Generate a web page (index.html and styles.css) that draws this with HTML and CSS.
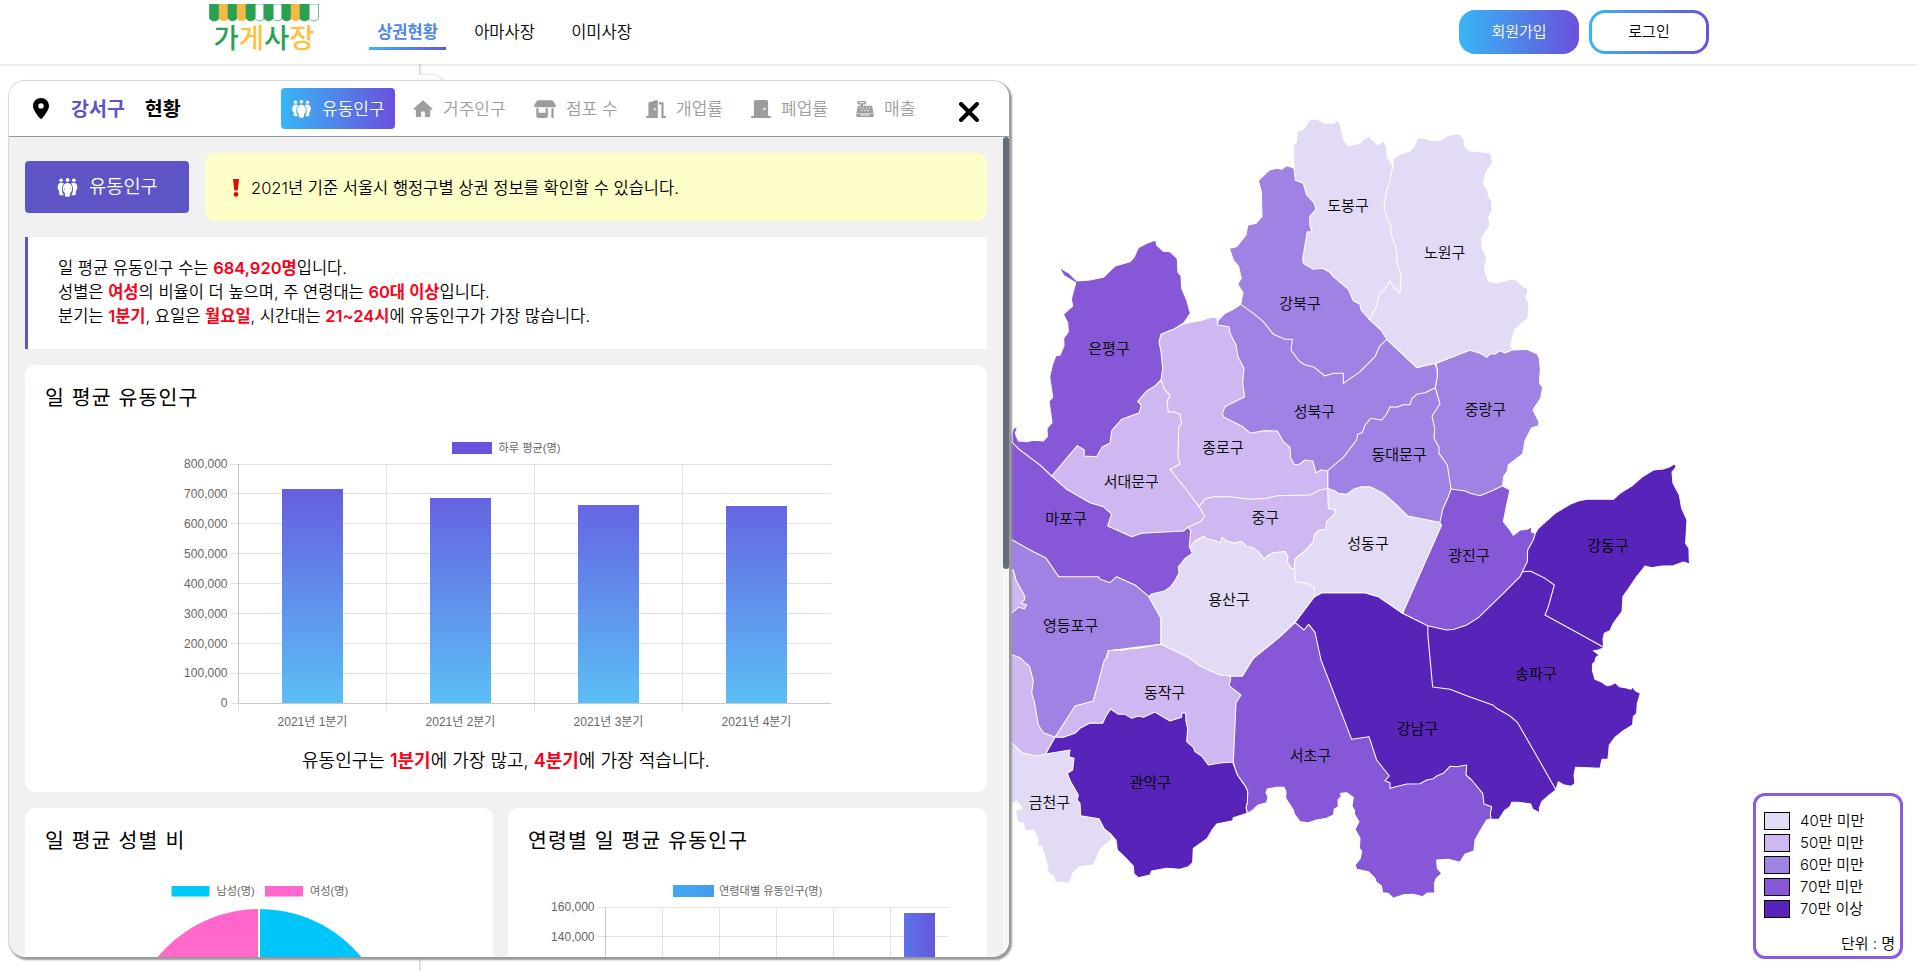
FILE: index.html
```html
<!DOCTYPE html>
<html lang="ko">
<head>
<meta charset="utf-8">
<title>가게사장 - 상권현황</title>
<link rel="stylesheet" href="styles.css">
</head>
<body>
<svg class="defs" width="0" height="0" aria-hidden="true">
  <defs>
    <symbol id="people" viewBox="0 0 24 22">
      <circle cx="4.6" cy="2.6" r="2.1"/><circle cx="12" cy="2.2" r="2.2"/><circle cx="19.4" cy="2.6" r="2.1"/>
      <path d="M4.8 5.600C2 5.600.6 8 .6 11c0 2 .8 3.200 1.800 4v3.200c0 1 .6 1.800 1.600 1.800h2.600c.5 0 .9-.3 1-.7C6.200 17.500 5.600 15.500 5.600 13c0-2.800.8-5 2.300-6.300-.6-.7-2-1.100-3.100-1.100z"/>
      <path d="M19.200 5.600c2.800 0 4.200 2.400 4.200 5.400 0 2-.8 3.200-1.800 4v3.200c0 1-.6 1.800-1.600 1.800h-2.600c-.5 0-.9-.3-1-.7 1.400-1.800 2-3.800 2-6.300 0-2.800-.8-5-2.300-6.300.6-.7 2-1.100 3.100-1.100z"/>
      <path fill-rule="evenodd" d="M12 5.800c-3.300 0-5.400 3-5.400 6.700 0 2.400 1 4 2.400 4.900V20c0 1 .8 1.800 1.800 1.800h2.400c1 0 1.800-.8 1.800-1.800v-2.600c1.400-.9 2.400-2.500 2.400-4.900 0-3.700-2.100-6.700-5.400-6.700zM9 10.300v4.200c-.6-1.100-.6-3 0-4.200zm6 0c.6 1.200.6 3.100 0 4.200z"/>
    </symbol>
    <symbol id="house" viewBox="0 0 20 18"><path d="M10 .3 19.800 9c.4.5.1 1.200-.5 1.200H17.600V17c0 .6-.4 1-1 1H12v-5c0-.5-.4-.9-.9-.9H8.900c-.5 0-.9.4-.9.9v5H3.400c-.6 0-1-.4-1-1v-6.800H.7c-.6 0-.9-.7-.5-1.200z"/></symbol>
    <symbol id="store" viewBox="0 0 22 18"><path fill-rule="evenodd" d="M4 .3h14c.5 0 .9.2 1.200.6l2.500 4c.7 1.100 0 2.400-1.300 2.400H1.600C.3 7.300-.4 6 .3 4.900l2.500-4C3.100.5 3.500.3 4 .3zM2.300 8.200h2.300v4.600h7V8.200h2.300V16c0 1.100-.9 2-2 2H4.300c-1.100 0-2-.9-2-2zM17.400 8.200h2.300V17c0 .6-.5 1-1.100 1s-1.200-.4-1.200-1z"/></symbol>
    <symbol id="door-open" viewBox="0 0 20 18"><path fill-rule="evenodd" d="M10.800.1c.6-.1 1 .3 1 .9V18H.9C.4 18 0 17.600 0 17s.4-1 .9-1h1.500V3.200c0-.5.3-.9.8-1zM9 8.200c-.5 0-.9.5-.9 1.100s.4 1.100.9 1.100.9-.5.9-1.100S9.500 8.200 9 8.200zM13 2.300h3.400c.7 0 1.200.5 1.200 1.200V16h1.500c.5 0 .9.4.9 1s-.4 1-.9 1h-3.700V4.500H13z"/></symbol>
    <symbol id="door" viewBox="0 0 20 18"><path fill-rule="evenodd" d="M4.800 0h10.400c1.100 0 1.900.8 1.900 1.900V16h2c.5 0 .9.400.9 1s-.4 1-.9 1H.9c-.5 0-.9-.4-.9-1s.4-1 .9-1h2V1.900C2.900.8 3.700 0 4.800 0zM13.500 7.900c-.7 0-1.200.5-1.200 1.100s.5 1.100 1.200 1.100 1.200-.5 1.200-1.100-.5-1.100-1.200-1.100z"/></symbol>
    <symbol id="register" viewBox="0 0 20 18"><path fill-rule="evenodd" d="M2.600 0h7.600c.6 0 1 .4 1 .9v2.300c0 .5-.4.9-1 .9H7.700v1.400h8.600c.9 0 1.700.6 1.900 1.500l1.400 6.600H.4L1.800 7c.2-.9 1-1.500 1.900-1.500h1.500V4.100H2.600c-.6 0-1-.4-1-.9V.9c0-.5.4-.9 1-.9zM3.400 1.500v1.100h6V1.500zM4 7.200v1.300h1.500V7.200zm3.400 0v1.300h1.500V7.200zm3.400 0v1.300h1.500V7.200zm3.400 0v1.300h1.500V7.200zM5.600 10v1.300h1.500V10zm3.500 0v1.300h1.500V10zm3.400 0v1.300H14V10zM.2 14.300h19.600v2c0 1-.7 1.700-1.700 1.700H1.900C.9 18 .2 17.300.2 16.300zm4.600.9v1h10.400v-1z"/></symbol>
    <symbol id="pin" viewBox="0 0 16 21"><path fill-rule="evenodd" d="M8 0c4.400 0 8 3.500 8 7.900 0 3.600-4.900 10.100-7.100 12.700-.5.500-1.300.5-1.800 0C4.900 18 0 11.500 0 7.900 0 3.500 3.600 0 8 0zm0 5.200a2.700 2.700 0 1 0 0 5.400 2.700 2.700 0 0 0 0-5.400z"/></symbol>
    <linearGradient id="bar-v" gradientUnits="userSpaceOnUse" x1="0" y1="464" x2="0" y2="704"><stop offset="0" stop-color="#6753de"/><stop offset="1" stop-color="#5bbff5"/></linearGradient>
    <linearGradient id="bar-h" x1="0" y1="0" x2="1" y2="0"><stop offset="0" stop-color="#5b74e8"/><stop offset="1" stop-color="#6758de"/></linearGradient>
    <linearGradient id="key-h" x1="0" y1="0" x2="1" y2="0"><stop offset="0" stop-color="#3fa8f4"/><stop offset="1" stop-color="#489bee"/></linearGradient>
    <linearGradient id="pink" x1="0" y1="0" x2="0" y2="1"><stop offset="0" stop-color="#ff66cc"/><stop offset="1" stop-color="#ff80b0"/></linearGradient>
  </defs>
</svg>

<header class="topbar">
  <a class="logo">
    <svg class="awning" viewBox="0 0 110 23" width="110" height="18" preserveAspectRatio="none">
      <g stroke="#2aa052" stroke-width=".8">
        <path fill="#2aa052" d="M.5 0h9.700v17a4.800 4.800 0 0 1-9.700 0z"/>
        <path fill="#f6b944" stroke="#f6b944" d="M10.200 0h8.800v17a4.400 4.400 0 0 1-8.800 0z"/>
        <path fill="#2aa052" d="M19 0h9.200v17a4.600 4.600 0 0 1-9.200 0z"/>
        <path fill="#f6b944" stroke="#f6b944" d="M28.200 0h8.800v17a4.400 4.400 0 0 1-8.800 0z"/>
        <path fill="#2aa052" d="M37 0h9.200v17a4.600 4.600 0 0 1-9.200 0z"/>
        <path fill="#fff" d="M46.200 0h8.800v17a4.400 4.400 0 0 1-8.800 0z"/>
        <path fill="#2aa052" d="M55 0h9.200v17a4.600 4.600 0 0 1-9.200 0z"/>
        <path fill="#fff" d="M64.200 0H73v17a4.400 4.400 0 0 1-8.800 0z"/>
        <path fill="#2aa052" d="M73 0h9.200v17a4.600 4.600 0 0 1-9.200 0z"/>
        <path fill="#f6b944" stroke="#f6b944" d="M82.200 0H91v17a4.400 4.400 0 0 1-8.800 0z"/>
        <path fill="#2aa052" d="M91 0h9.200v17a4.600 4.600 0 0 1-9.200 0z"/>
        <path fill="#fff" d="M100.200 0h9.300v17a4.600 4.600 0 0 1-9.300 0z"/>
      </g>
    </svg>
    <span class="logo-text"><i class="g">가</i><i class="y">게</i><i class="g">사</i><i class="y">장</i></span>
  </a>
  <nav class="nav">
    <a class="nav-item active">상권현황</a>
    <a class="nav-item">아마사장</a>
    <a class="nav-item">이미사장</a>
  </nav>
  <div class="auth">
    <button class="btn fill">회원가입</button>
    <button class="btn line">로그인</button>
  </div>
</header>

<main class="stage">
  <svg class="map" viewBox="0 -108 2751 2721" width="917" height="907">
    <g stroke="#fff" stroke-width="3.200" stroke-linejoin="round">
      <path class="c3" d="M0 1200 200 1300 350 1390 447 1480 447 1490 483 1555 483 1633 325 1652 280 1803 165 1912 100 1900 0 1700z"/>
      <path class="c2" d="M325 1652 350 1650 365 1651 390 1646 415 1645 483 1633 600 1650 727 1700 727 1900 700 2000 600 2050 400 2000 165 1912 225 1818 280 1803 313 1680 322 1673z"/>
      <path class="c4" d="M885 1567 840 1610 760 1675 727 1728 690 1729 692 1738 687 1757 723 1785 708 1808 700 1985 704 2002 712 2025 737 2060 743 2075 742 2108 738 2122 742 2140 756 2132 775 2115 800 2108 804 2090 798 2078 802 2067 830 2062 852 2062 858 2075 857 2095 880 2130 883 2142 900 2165 925 2168 950 2160 980 2155 1000 2145 1003 2127 1015 2120 1014 2100 1024 2090 1022 2080 1040 2078 1060 2092 1056 2118 1064 2132 1063 2142 1077 2165 1065 2188 1080 2215 1078 2245 1085 2253 1081 2275 1065 2295 1070 2308 1105 2315 1125 2335 1128 2345 1144 2358 1148 2378 1165 2380 1180 2395 1210 2384 1240 2383 1268 2390 1280 2380 1305 2378 1303 2350 1309 2335 1325 2320 1312 2305 1310 2280 1345 2278 1380 2287 1395 2262 1422 2253 1425 2220 1445 2185 1460 2160 1473 2157 1480 2060 1400 1940 1150 1850 1050 1700 1000 1560 930 1540z"/>
      <path class="c5" d="M943 1490 965 1478 1095 1478 1135 1490 1208 1540 1283 1575 1400 1700 1600 1900 1668 2070 1652 2082 1625 2105 1618 2125 1619 2138 1598 2128 1592 2112 1555 2107 1535 2107 1530 2120 1513 2132 1497 2158 1473 2157 1471 2140 1475 2120 1452 2112 1448 2080 1415 2040 1398 2025 1400 1995 1370 2000 1350 1999 1330 2020 1310 2028 1300 2036 1280 2040 1260 2051 1220 2052 1170 2065 1170 2048 1155 2042 1168 2028 1130 1980 1107 1910 1055 1918 963 1680 945 1597 926 1573 912 1590 885 1567z"/>
      <path class="c5" d="M1567 1415 1620 1390 1750 1450 1808 1640 1812 1643 1795 1650 1780 1652 1798 1665 1788 1672 1785 1685 1778 1692 1777 1710 1785 1738 1803 1745 1820 1757 1833 1755 1845 1748 1858 1760 1880 1764 1892 1768 1898 1761 1906 1772 1921 1780 1912 1810 1910 1840 1900 1850 1898 1875 1870 1892 1845 1912 1828 1935 1824 1977 1806 1978 1800 2005 1727 2002 1722 2025 1725 2050 1713 2059 1690 2054 1675 2045 1668 2070 1600 1950 1552 1867 1530 1848 1490 1825 1480 1816 1400 1787 1350 1768 1298 1761 1284 1610 1283 1575 1300 1500z"/>
      <path class="c5" d="M1567 1415 1560 1350 1580 1300 1606 1300 1615 1285 1665 1240 1710 1213 1735 1203 1760 1198 1840 1198 1860 1180 1895 1158 1925 1132 1960 1110 1990 1107 2010 1100 2028 1089 2027 1103 2016 1116 2019 1150 2038 1185 2045 1225 2061 1260 2057 1330 2067 1345 2068 1385 2072 1393 2050 1386 2020 1397 1985 1398 1955 1403 1935 1398 1925 1412 1910 1430 1890 1460 1869 1490 1866 1535 1840 1570 1830 1592 1813 1600 1809 1617 1811 1642 1735 1600 1635 1545 1645 1520 1663 1455 1635 1435 1592 1414z"/>
      <path class="c4" d="M1355 1150 1508 1158 1530 1170 1520 1215 1510 1265 1530 1290 1540 1306 1560 1290 1580 1288 1595 1281 1595 1297 1606 1300 1600 1320 1583 1350 1582 1385 1567 1415 1560 1430 1510 1480 1435 1553 1400 1575 1362 1588 1340 1590 1283 1577 1208 1540 1250 1350 1290 1150z"/>
      <path class="c3" d="M1308 790 1370 766 1410 740 1500 740 1540 750 1580 748 1612 762 1618 775 1621 810 1618 848 1628 862 1622 895 1599 930 1617 965 1615 978 1595 983 1575 1022 1568 1062 1525 1095 1522 1113 1511 1130 1508 1157 1475 1173 1440 1187 1410 1180 1395 1173 1353 1167 1280 1000 1280 900 1306 863 1312 810z"/>
      <path class="c3" d="M722 613 700 628 675 640 655 660 652 675 600 800 600 960 750 1030 850 1070 880 1120 983 1135 1080 1100 1310 900 1306 863 1312 830 1311 805 1305 793 1300 720 1200 660 1160 700 1030 700 900 650z"/>
      <path class="c3" d="M983 1112 1030 1072 1070 1020 1073 1003 1087 998 1095 975 1112 955 1145 960 1160 942 1170 920 1190 922 1210 914 1230 914 1235 897 1250 883 1275 878 1306 863 1312 885 1320 912 1296 948 1304 985 1302 1015 1317 1042 1317 1060 1342 1095 1353 1167 1345 1190 1328 1228 1318 1275 1260 1290 1100 1220 983 1180z"/>
      <path class="c1" d="M983 1165 1005 1173 1015 1180 1040 1183 1060 1168 1085 1160 1110 1160 1150 1180 1190 1215 1223 1248 1318 1267 1325 1275 1265 1410 1208 1540 1135 1490 1095 1478 965 1478 943 1490 860 1450 870 1400 885 1377 915 1352 940 1200z"/>
      <path class="c2" d="M885 1377 883 1405 860 1440 780 1420 570 1370 550 1240 580 1200 700 1150 950 1150 983 1165 985 1226 1005 1228 1003 1243 980 1265 977 1288 955 1291 943 1303 940 1325 915 1352z"/>
      <path class="c1" d="M447 1490 455 1480 500 1400 570 1342 585 1323 612 1308 619 1316 645 1322 661 1328 666 1312 681 1324 705 1330 724 1324 740 1340 757 1342 775 1355 793 1378 803 1367 820 1358 855 1354 864 1370 861 1385 875 1407 883 1405 887 1445 920 1450 943 1463 943 1490 885 1567 840 1610 760 1675 727 1728 685 1727 660 1725 600 1698 565 1672 483 1633 483 1555z"/>
      <path class="c4" d="M0 980 100 1050 300 1200 560 1260 565 1283 572 1292 568 1340 577 1360 555 1375 540 1395 535 1400 537 1420 523 1445 512 1460 495 1472 455 1482 447 1490 405 1455 350 1430 330 1448 300 1438 296 1430 176 1430 137 1373 100 1355 37 1320 0 1300z"/>
      <path class="c2" d="M652 653 635 652 600 662 575 667 550 672 520 688 483 703 440 770 450 900 520 1150 597 1220 615 1197 640 1190 690 1190 750 1198 800 1195 830 1187 930 1185 960 1170 983 1165 983 1112 963 1110 948 1118 938 1083 915 1080 895 1095 883 1093 872 1075 870 1042 850 1025 832 993 790 992 752 1000 725 978 672 952 667 940 675 920 734 890 728 850 732 805 714 770 708 735 690 700 687 680 652 675z"/>
      <path class="c4" d="M230 543 270 540 310 532 345 498 390 485 402 472 415 443 440 430 467 420 470 435 490 454 510 455 532 476 534 517 543 527 545 565 560 600 571 640 552 668 520 688 483 703 477 725 483 755 488 805 483 840 400 1000 290 1090 155 1128 120 1095 60 1050 37 1028 36 1000 40 985 53 980 46 1000 55 1023 80 1025 100 1021 130 1023 142 1010 141 985 156 968 147 903 158 892 149 830 158 792 167 768 180 765 192 738 191 715 205 695 203 668 190 643 218 618 214 597 227 548 193 528 176 502 208 520z"/>
      <path class="c2" d="M483 840 465 858 440 873 425 890 413 905 424 915 418 938 400 945 365 958 335 992 330 1030 307 1040 290 1070 252 1068 253 1050 232 1037 155 1128 200 1168 270 1208 310 1220 335 1242 323 1278 395 1310 425 1300 550 1293 565 1281 600 1265 615 1250 597 1220 560 1170 510 1108 540 1093 534 1070 536 980 545 970 540 943 520 935 505 937 501 905 510 885 495 870z"/>
      <path class="c3" d="M880 203 860 197 845 208 830 205 808 210 775 242 784 275 786 350 768 370 743 376 738 405 710 440 688 445 700 480 716 500 724 535 713 553 729 578 722 613 760 640 790 665 820 703 855 718 877 718 873 750 897 783 915 795 940 800 975 828 1000 820 1030 820 1030 850 1080 815 1125 770 1138 740 1160 718 1150 620 1060 500 1000 330 900 230z"/>
      <path class="c1" d="M880 137 890 125 891 95 910 88 930 57 955 59 975 70 1002 70 1011 60 1022 75 1026 100 1034 124 1045 137 1082 129 1090 118 1107 109 1118 120 1132 134 1153 123 1160 145 1162 172 1177 195 1200 300 1250 600 1107 657 1083 630 1080 613 1060 602 1045 568 1000 530 987 515 968 505 940 508 910 490 908 475 922 395 936 396 930 378 929 350 948 328 942 308 920 285 910 250 886 241 882 200z"/>
      <path class="c1" d="M1179 177 1200 162 1230 153 1243 137 1253 113 1280 116 1300 122 1325 120 1340 108 1367 101 1382 104 1392 118 1394 138 1410 153 1435 154 1452 157 1472 158 1478 187 1460 215 1449 250 1462 270 1467 290 1475 303 1477 330 1466 350 1470 376 1445 415 1447 445 1461 475 1453 502 1465 543 1490 549 1532 538 1550 540 1570 560 1582 564 1583 580 1576 590 1587 610 1584 655 1543 690 1532 738 1540 748 1515 759 1500 752 1485 762 1470 762 1460 772 1440 760 1410 751 1370 766 1308 790 1250 803 1210 765 1160 718 1143 690 1107 657 1127 625 1140 578 1155 568 1170 542 1180 560 1200 579 1203 525 1191 490 1190 450 1174 405 1172 378 1152 325 1158 280 1171 235 1179 195z"/>
      <path class="c1" d="M0 1900 37 1928 110 1940 210 1950 300 2100 335 2218 300 2250 280 2295 240 2300 217 2322 215 2335 205 2350 165 2345 162 2330 138 2312 145 2305 125 2240 108 2235 115 2225 103 2190 75 2192 70 2170 52 2165 47 2130 67 2125 50 2103 38 2110 0 2110z"/>
      <path class="c2" d="M0 1660 37 1665 60 1673 75 1688 88 1698 100 1743 95 1780 103 1805 115 1875 130 1898 165 1912 137 1962 110 1968 65 1958 37 1930 0 1900z"/>
      <path class="c2" d="M0 1400 40 1410 48 1440 75 1490 73 1500 63 1508 80 1515 73 1526 55 1522 37 1538 0 1550z"/>
      <path class="c5" d="M165 1912 190 1912 225 1900 240 1885 270 1869 308 1870 318 1848 332 1827 355 1843 375 1843 395 1855 415 1848 430 1852 465 1836 485 1848 510 1863 545 1852 545 1838 557 1840 558 1865 563 1885 560 1925 580 1942 585 1955 605 1968 625 1995 660 1989 698 1986 704 2002 712 2025 737 2060 743 2075 742 2108 738 2122 742 2140 700 2153 698 2162 650 2172 635 2192 622 2215 580 2245 578 2288 565 2300 540 2308 500 2305 455 2313 450 2325 415 2333 402 2322 400 2298 375 2272 352 2250 348 2220 330 2200 313 2187 297 2156 242 2147 240 2110 232 2100 235 2085 212 2045 202 2020 218 2010 222 1975 207 1970 210 1950 137 1962z"/>
    </g>
    <g class="gu">
      <text x="1044" y="333">도봉구</text><text x="1334" y="474">노원구</text><text x="900" y="626">강북구</text>
      <text x="327" y="761">은평구</text><text x="943" y="950">성북구</text><text x="1456" y="944">중랑구</text>
      <text x="669" y="1058">종로구</text><text x="1197" y="1079">동대문구</text><text x="394" y="1160">서대문구</text>
      <text x="198" y="1273">마포구</text><text x="796" y="1268">중구</text><text x="1104" y="1346">성동구</text>
      <text x="687" y="1515">용산구</text><text x="1407" y="1382">광진구</text><text x="1824" y="1352">강동구</text>
      <text x="1608" y="1736">송파구</text><text x="212" y="1592">영등포구</text><text x="494" y="1793">동작구</text>
      <text x="1252" y="1901">강남구</text><text x="931" y="1982">서초구</text><text x="451" y="2064">관악구</text>
      <text x="148" y="2124">금천구</text>
    </g>
  </svg>

  <aside class="drawer"><span class="drawer-tab"></span></aside>

  <section class="panel">
    <div class="panel-head">
      <svg class="pin" width="16" height="21"><use href="#pin"/></svg>
      <h2 class="place"><b>강서구</b><span>현황</span></h2>
      <ul class="tabs">
        <li class="tab on"><svg width="23" height="18"><use href="#people"/></svg>유동인구</li>
        <li class="tab t2"><svg width="20" height="17"><use href="#house"/></svg>거주인구</li>
        <li class="tab t3"><svg width="22" height="18"><use href="#store"/></svg>점포 수</li>
        <li class="tab t4"><svg width="20" height="18"><use href="#door-open"/></svg>개업률</li>
        <li class="tab t5"><svg width="20" height="18"><use href="#door"/></svg>폐업률</li>
        <li class="tab t6"><svg width="18" height="18"><use href="#register"/></svg>매출</li>
      </ul>
      <svg class="close" viewBox="0 0 20 20" width="20" height="20"><path d="M2 2 18 18M18 2 2 18"/></svg>
    </div>

    <div class="panel-body">
      <div class="row">
        <div class="badge"><svg width="25" height="19"><use href="#people"/></svg>유동인구</div>
        <p class="notice">
          <svg width="6" height="18" viewBox="0 0 6 18"><path fill="#e00b0b" d="M0 0h6L4.700 11.500H1.300z"/><circle cx="3" cy="15.400" r="2.400" fill="#e00b0b"/></svg>
          <span>2021년 기준 서울시 행정구별 상권 정보를 확인할 수 있습니다.</span>
        </p>
      </div>

      <div class="summary">
        <p>일 평균 유동인구 수는 <em>684,920명</em>입니다.</p>
        <p>성별은 <em>여성</em>의 비율이 더 높으며, 주 연령대는 <em>60대 이상</em>입니다.</p>
        <p>분기는 <em>1분기</em>, 요일은 <em>월요일</em>, 시간대는 <em>21~24시</em>에 유동인구가 가장 많습니다.</p>
      </div>

      <article class="card wide">
        <h3>일 평균 유동인구</h3>
        <svg class="chart" viewBox="175 430 662 300" width="662" height="300">
          <rect x="452" y="442" width="40" height="12" fill="#6753de"/>
          <text class="key" x="498.500" y="452">하루 평균(명)</text>
          <g class="grid">
            <path d="M231 464.500H831M231 493.500H831M231 523.500H831M231 553.500H831M231 583.500H831M231 613.500H831M231 643.500H831M231 673.500H831M386.500 464V711M534.500 464V711M682.500 464V711"/>
            <path class="axis" d="M238.500 464V703"/><path d="M231 703.500H239M238.500 703V711"/>
          </g>
          <g fill="url(#bar-v)">
            <rect x="282" y="489" width="61" height="214.500"/><rect x="430" y="498" width="61" height="205.500"/>
            <rect x="578" y="505" width="61" height="198.500"/><rect x="726" y="506" width="61" height="197.500"/>
          </g>
          <path class="axis" d="M239 703.500H831"/>
          <g class="end">
            <text x="227.500" y="468">800,000</text><text x="227.500" y="498">700,000</text><text x="227.500" y="528">600,000</text>
            <text x="227.500" y="558">500,000</text><text x="227.500" y="588">400,000</text><text x="227.500" y="618">300,000</text>
            <text x="227.500" y="648">200,000</text><text x="227.500" y="677">100,000</text><text x="227.500" y="707">0</text>
          </g>
          <g class="mid">
            <text x="312.500" y="726">2021년 1분기</text><text x="460.500" y="726">2021년 2분기</text>
            <text x="608.500" y="726">2021년 3분기</text><text x="756.500" y="726">2021년 4분기</text>
          </g>
        </svg>
        <p class="caption">유동인구는 <em>1분기</em>에 가장 많고, <em>4분기</em>에 가장 적습니다.</p>
      </article>

      <div class="pair">
        <article class="card">
          <h3>일 평균 성별 비</h3>
          <svg class="chart" viewBox="25 873 468 310" width="468" height="310">
            <rect x="171.500" y="886" width="38" height="10.500" fill="#00c8f8"/><text class="key" x="216.500" y="895">남성(명)</text>
            <rect x="265" y="886" width="38" height="10.500" fill="#ff66cc"/><text class="key" x="310" y="895">여성(명)</text>
            <path fill="#00c5f8" d="M259.500 909a132 132 0 0 1 0 264z"/>
            <path fill="url(#pink)" d="M259.500 909a132 132 0 0 0 0 264z"/>
            <path stroke="#fff" stroke-width="2" d="M259 908V1173"/>
          </svg>
        </article>
        <article class="card">
          <h3>연령별 일 평균 유동인구</h3>
          <svg class="chart" viewBox="508 873 479 310" width="479" height="310">
            <rect x="673" y="885" width="41" height="12" fill="url(#key-h)"/><text class="key" x="719" y="895">연령대별 유동인구(명)</text>
            <g class="grid">
              <path d="M598 907.500H948M598 936.500H948M598 966.500H948M662.500 907V1170M719.500 907V1170M776.500 907V1170M833.500 907V1170M890.500 907V1170"/>
              <path class="axis" d="M605.500 907V1170"/>
            </g>
            <rect x="904" y="913" width="31" height="250" fill="url(#bar-h)"/>
            <g class="end"><text x="594.500" y="911">160,000</text><text x="594.500" y="941">140,000</text></g>
          </svg>
        </article>
      </div>
      <span class="scroll-track"><span class="scroll-thumb"></span></span>
    </div>
  </section>

  <div class="legend">
    <ul>
      <li><i class="c1"></i>40만 미만</li>
      <li><i class="c2"></i>50만 미만</li>
      <li><i class="c3"></i>60만 미만</li>
      <li><i class="c4"></i>70만 미만</li>
      <li><i class="c5"></i>70만 이상</li>
    </ul>
    <p>단위 : 명</p>
  </div>
</main>
</body>
</html>
```
FILE: styles.css
```css
* { box-sizing: border-box; margin: 0; padding: 0; }
html, body { height: 100%; overflow: hidden; }
body {
  display: flex;
  flex-direction: column;
  background: #fff;
  color: #000;
  font: 350 15px/24px Inter, "Noto Sans CJK KR", sans-serif;
}
ul { list-style: none; }
.defs { position: absolute; }
svg { display: block; flex: none; }
em { font-style: normal; font-weight: 600; color: #fb0019; }

.c1 { fill: #e3dbf6; background: #e3dbf6; }
.c2 { fill: #cfb8f2; background: #cfb8f2; }
.c3 { fill: #a082e5; background: #a082e5; }
.c4 { fill: #8658d8; background: #8658d8; }
.c5 { fill: #5723b8; background: #5723b8; }

/* top bar */
.topbar {
  position: relative;
  z-index: 1;
  flex: none;
  display: flex;
  height: 64px;
  padding: 0 208px 0 209px;
  background: #fff;
  box-shadow: 0 1px 3px rgba(0, 0, 0, .14);
}
.logo { width: 110px; padding-top: 4px; }
.logo-text {
  display: flex;
  justify-content: center;
  margin-top: 2px;
  font-size: 27.500px;
  line-height: 28px;
  font-weight: 500;
}
.logo-text i { font-style: normal; }
.g { color: #2aa052; }
.y { color: #fcc042; }
.nav { display: flex; margin-left: 50px; gap: 20px; }
.nav-item {
  width: 77px;
  height: 50px;
  padding: 20px 0 0;
  text-align: center;
  font-size: 16.500px;
  white-space: nowrap;
}
.nav-item.active {
  color: #4d87ea;
  font-weight: 600;
  border-bottom: 3px solid;
  border-image: linear-gradient(90deg, #37b6f6, #6753de) 1;
}
.auth { display: flex; gap: 10px; margin-left: auto; padding-top: 10px; }
.btn {
  width: 120px;
  height: 44px;
  border: 3px solid transparent;
  border-radius: 16px;
  font: 350 15px/20px Inter, "Noto Sans CJK KR", sans-serif;
}
.btn.fill { color: #fff; background: linear-gradient(90deg, #37b6f6, #6a50dc) border-box; }
.btn.line {
  color: #000;
  background: linear-gradient(#fff, #fff) padding-box, linear-gradient(90deg, #37b6f6, #6a50dc) border-box;
}

/* map canvas */
.stage { position: relative; flex: 1; overflow: hidden; }
.map { margin-left: auto; }
.gu { font-size: 45px; font-weight: 350; text-anchor: middle; }

.drawer {
  position: absolute;
  left: 0;
  top: 0;
  width: 420px;
  height: 100%;
  background: #fff;
  border-right: 1px solid #d4d4d4;
  box-shadow: 1px 0 3px rgba(0, 0, 0, .1);
}
.drawer-tab {
  position: absolute;
  left: 419px;
  top: 11px;
  width: 25px;
  height: 48px;
  background: #fff;
  border-radius: 0 12px 12px 0;
  box-shadow: 1px 0 3px rgba(0, 0, 0, .2);
}

/* district panel */
.panel {
  position: absolute;
  left: 9px;
  top: 17px;
  width: 1000px;
  height: 876px;
  display: flex;
  flex-direction: column;
  overflow: hidden;
  background: #f1f1f1;
  border-radius: 16px;
  box-shadow: 2px 2px 2px 1px #999, 0 0 1px 1px #d8d8d8;
}
.panel-head {
  flex: none;
  display: flex;
  height: 56px;
  padding: 0 30px 0 24px;
  background: #fff;
  border-bottom: 1px solid #999;
}
.pin { margin-top: 17px; }
.place { display: flex; gap: 20px; width: 210px; margin: 14px 0 0 22px; font-size: 19.500px; line-height: 28px; font-weight: 600; }
.place b { color: #5d55c5; font-weight: 600; }
.tabs { display: flex; padding-top: 7px; }
.tab {
  display: flex;
  align-items: center;
  gap: 10px;
  height: 41px;
  color: #9d9d9d;
  fill: #9d9d9d;
  font-size: 17px;
  white-space: nowrap;
}
.tab.on {
  width: 114px;
  padding-left: 9px;
  gap: 9px;
  color: #fff;
  fill: #fff;
  border-radius: 4px;
  background: linear-gradient(90deg, #37b6f6, #6a50dc);
}
.t2 { width: 121px; margin-left: 18px; }
.t3 { width: 112px; }
.t4 { width: 105px; }
.t5 { width: 105px; }
.close { margin: 21px 0 0 auto; fill: none; stroke: #000; stroke-width: 4; stroke-linecap: round; }

.panel-body {
  position: relative;
  flex: 1;
  display: flex;
  flex-direction: column;
  gap: 16px;
  min-height: 0;
  padding: 16px 22px 0 16px;
  overflow: hidden;
}
.panel-body > * { flex: none; }
.row { display: flex; align-items: center; gap: 16px; height: 68px; }
.badge {
  display: flex;
  align-items: center;
  gap: 9px;
  width: 164px;
  height: 52px;
  padding-left: 30px;
  border-radius: 4px;
  background: #5d55c5;
  color: #fff;
  fill: #fff;
  font-size: 18.700px;
}
.notice {
  flex: 1;
  display: flex;
  align-items: center;
  gap: 12px;
  height: 68px;
  padding: 1px 0 0 28px;
  border-radius: 10px;
  background: #fefec8;
  font-size: 16.500px;
}
.summary {
  height: 112px;
  padding: 19px 0 0 30px;
  background: #fff;
  border-left: 3px solid #5d55c5;
  font-size: 16.500px;
}
.card { background: #fff; border-radius: 10px; }
.card h3 { padding: 19px 0 0 20px; font-size: 20.500px; line-height: 28px; font-weight: 400; letter-spacing: 1.100px; }
.wide { height: 427px; }
.wide .chart { margin: 18px 0 0 150px; }
.caption { margin-top: 18px; text-align: center; font-size: 18px; line-height: 26px; }
.pair { display: grid; grid-template-columns: 468px 479px; gap: 15px; }
.pair .chart { margin-top: 18px; }
.chart text { font: 12px "Liberation Sans", "Noto Sans CJK KR", sans-serif; fill: #666; }
.chart .key { font-size: 11.200px; }
.mid { text-anchor: middle; }
.end { text-anchor: end; }
.grid path { stroke: #e2e2e2; fill: none; }
.grid .axis, .axis { stroke: #c8c8c8; fill: none; }

.scroll-track { position: absolute; top: 0; right: 0; width: 6px; height: 100%; background: #f7f7f7; }
.scroll-thumb { display: block; height: 432px; border-radius: 3px; background: #656c79; }

/* colour key */
.legend {
  position: absolute;
  left: 1753px;
  top: 729px;
  width: 150px;
  height: 166px;
  display: flex;
  flex-direction: column;
  padding: 14px 5px 0 8px;
  background: #fff;
  border: 3px solid #8a5bdb;
  border-radius: 12px;
}
.legend li { display: flex; align-items: center; gap: 10px; height: 22px; }
.legend i { width: 26px; height: 18px; border: 1px solid #000; }
.legend p { margin-top: 12px; text-align: right; }
```
